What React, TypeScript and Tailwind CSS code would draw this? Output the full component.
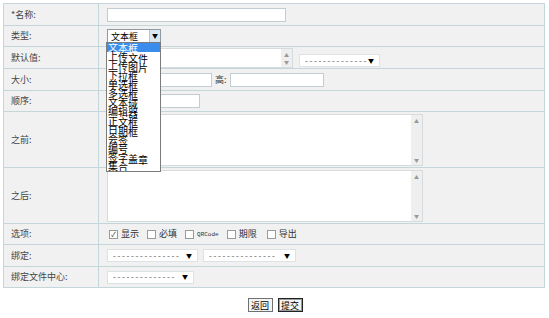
import React from "react";

const font = { fontFamily: '"Noto Sans CJK SC", "Noto Sans", sans-serif' };

// options shown in the open type dropdown
const typeOptions = [
  "文本框",
  "上传文件",
  "上传图片",
  "下拉框",
  "单选框",
  "多选框",
  "文本域",
  "编辑器",
  "正文框",
  "日期框",
  "会签",
  "编号",
  "签字盖章",
  "集合",
];

const stagger = ["", "translate-y-[1px]", "translate-y-[2px]", "translate-y-[3px]"];

const Row = ({ label, h, children }: { label: string; h: string; children?: React.ReactNode }) => (
  <div className={`flex border-b border-[#c3d6da] ${h}`}>
    <div className="w-[95px] shrink-0 border-r border-[#c3d6da] pl-[7px] flex items-center text-[9px] text-[#444]">
      {label}
    </div>
    <div className="flex-1 pl-[8px] flex items-center">{children}</div>
  </div>
);

const TextInput = ({ w }: { w: string }) => (
  <div className={`h-[14px] bg-white border border-[#c2cdd1] ${w}`} />
);

const Select = ({ w, dashes }: { w: string; dashes: string }) => (
  <div className={`h-[13px] bg-white border border-[#dde3e5] flex items-center justify-between pl-[4px] pr-[5px] overflow-hidden ${w}`}>
    <span
      className="text-[8px] leading-none text-[#555] tracking-[-0.3px] whitespace-nowrap"
      style={{ fontFamily: '"Liberation Mono", monospace' }}
    >
      {dashes}
    </span>
    <span className="text-[6px] leading-none text-black shrink-0">▼</span>
  </div>
);

const Scrollbar = () => (
  <div className="w-[11px] h-full bg-[#efefef] flex flex-col items-center justify-between py-[3px] text-[5px] leading-none text-[#999]">
    <span>▲</span>
    <span>▼</span>
  </div>
);

const Check = ({ checked, label, mono }: { checked?: boolean; label: string; mono?: boolean }) => (
  <div className="flex items-center mr-[8px]">
    <div className="w-[9px] h-[9px] border border-[#9a9a9a] bg-white flex items-center justify-center text-[7px] leading-none text-[#333]">
      {checked ? "✓" : ""}
    </div>
    {mono ? (
      <span className="ml-[3px] text-[6px] text-[#333]" style={{ fontFamily: '"Liberation Mono", monospace' }}>
        {label}
      </span>
    ) : (
      <span className="ml-[3px] text-[9px] text-[#333]">{label}</span>
    )}
  </div>
);

export default function App() {
  return (
    <div className="w-[549px] h-[318px] bg-white" style={font}>
      <div className="pt-[3px] pl-[3px]">
        <div className="w-[542px] border border-b-0 border-[#c3d6da] bg-[#f1f1f1]">
          <Row label="*名称:" h="h-[22px]">
            <TextInput w="w-[179px]" />
          </Row>
          <Row label="类型:" h="h-[21px]">
            <div className="relative">
              <div className="w-[54px] h-[14px] bg-white border border-[#8e9aa0] flex items-center">
                <span className="flex-1 pl-[3px] text-[9px] leading-none text-black">文本框</span>
                <div className="w-[11px] h-[12px] bg-[#d9e6f3] border-l border-[#b4c4d4] flex items-center justify-center text-[6px] leading-none">
                  ▼
                </div>
              </div>
              {/* open dropdown list */}
              <div className="absolute left-[-1px] top-[13px] w-[55px] h-[130px] bg-white border border-[#7b7b7b] z-10 overflow-hidden">
                {typeOptions.map((opt, i) => (
                  <div
                    key={opt}
                    className={`h-[9.2px] leading-[8px] text-[10px] pl-[1px] whitespace-nowrap ${
                      i === 0 ? "bg-[#3b8ded] text-white" : "text-black"
                    }`}
                  >
                    {opt.split("").map((c, j) => (
                      <span key={j} className={`inline-block ${stagger[j]}`}>
                        {c}
                      </span>
                    ))}
                  </div>
                ))}
              </div>
            </div>
          </Row>
          <Row label="默认值:" h="h-[22px]">
            <div className="flex items-center">
              <div className="w-[186px] h-[20px] bg-white border border-[#d6dcde] flex justify-end">
                <Scrollbar />
              </div>
              <div className="ml-[6px] mt-[6px]">
                <Select w="w-[81px]" dashes="--------------" />
              </div>
            </div>
          </Row>
          <Row label="大小:" h="h-[22px]">
            <TextInput w="w-[105px]" />
            <span className="ml-[3px] mr-[3px] text-[9px] text-[#333]">高:</span>
            <TextInput w="w-[94px]" />
          </Row>
          <Row label="顺序:" h="h-[21px]">
            <TextInput w="w-[93px]" />
          </Row>
          <Row label="之前:" h="h-[56px]">
            <div className="w-[316px] h-[52px] bg-white border border-[#d6dcde] flex justify-end">
              <Scrollbar />
            </div>
          </Row>
          <Row label="之后:" h="h-[56px]">
            <div className="w-[316px] h-[52px] bg-white border border-[#d6dcde] flex justify-end">
              <Scrollbar />
            </div>
          </Row>
          <Row label="选项:" h="h-[21px]">
            <div className="flex items-center pl-[2px]">
              <Check checked label="显示" />
              <Check label="必填" />
              <Check label="QRCode" mono />
              <Check label="期限" />
              <div className="w-[2px]" />
              <Check label="导出" />
            </div>
          </Row>
          <Row label="绑定:" h="h-[22px]">
            <Select w="w-[91px]" dashes="---------------" />
            <div className="w-[5px]" />
            <Select w="w-[93px]" dashes="---------------" />
          </Row>
          <Row label="绑定文件中心:" h="h-[21px]">
            <Select w="w-[87px]" dashes="--------------" />
          </Row>
        </div>
      </div>
      <div className="flex justify-center gap-[5px] mt-[10px] pl-[1px]">
        <button className="h-[14px] w-[25px] border border-[#707070] bg-[#f4f4f4] text-[9px] leading-none text-black">
          返回
        </button>
        <button className="h-[14px] w-[25px] border border-[#222] bg-[#f4f4f4] shadow-[inset_0_0_0_1px_#9a9a9a] text-[9px] leading-none text-black">
          提交
        </button>
      </div>
    </div>
  );
}
